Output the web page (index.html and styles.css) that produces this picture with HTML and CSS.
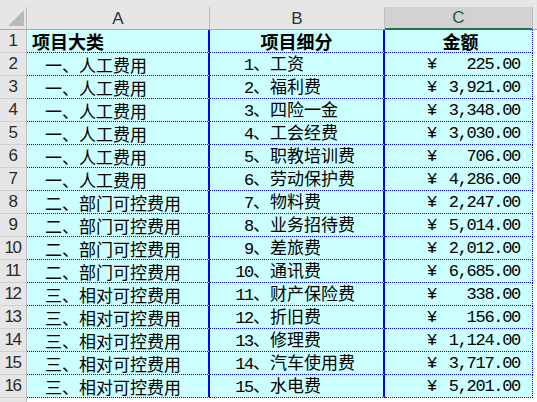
FILE: index.html
```html
<!DOCTYPE html>
<html lang="zh-CN">
<head>
<meta charset="utf-8">
<title>费用明细</title>
<link rel="stylesheet" href="styles.css">
</head>
<body>
<div class="sheet">
  <div class="topstrip"></div>
  <div class="grid">
    <div class="corner"><svg width="16" height="16" viewBox="0 0 16 16"><polygon points="16,0 16,16 0,16" fill="#b9b9b9"/></svg></div>
    <div class="colhead">A</div>
    <div class="colhead">B</div>
    <div class="colhead sel">C</div>
    <div class="colhead rest"></div>

    <div class="rowhead">1</div>
    <div class="cell a head">项目大类</div>
    <div class="cell b head center">项目细分</div>
    <div class="cell c head center">金额</div>
    <div class="blank"></div>

    <div class="rowhead">2</div>
    <div class="cell a">一、人工费用</div>
    <div class="cell b"><span class="lbl"><span class="n">1</span>、工资</span></div>
    <div class="cell c"><span class="y">¥</span><span class="v">225.00</span></div>
    <div class="blank"></div>

    <div class="rowhead">3</div>
    <div class="cell a">一、人工费用</div>
    <div class="cell b"><span class="lbl"><span class="n">2</span>、福利费</span></div>
    <div class="cell c"><span class="y">¥</span><span class="v">3,921.00</span></div>
    <div class="blank"></div>

    <div class="rowhead">4</div>
    <div class="cell a">一、人工费用</div>
    <div class="cell b"><span class="lbl"><span class="n">3</span>、四险一金</span></div>
    <div class="cell c"><span class="y">¥</span><span class="v">3,348.00</span></div>
    <div class="blank"></div>

    <div class="rowhead">5</div>
    <div class="cell a">一、人工费用</div>
    <div class="cell b"><span class="lbl"><span class="n">4</span>、工会经费</span></div>
    <div class="cell c"><span class="y">¥</span><span class="v">3,030.00</span></div>
    <div class="blank"></div>

    <div class="rowhead">6</div>
    <div class="cell a">一、人工费用</div>
    <div class="cell b"><span class="lbl"><span class="n">5</span>、职教培训费</span></div>
    <div class="cell c"><span class="y">¥</span><span class="v">706.00</span></div>
    <div class="blank"></div>

    <div class="rowhead">7</div>
    <div class="cell a">一、人工费用</div>
    <div class="cell b"><span class="lbl"><span class="n">6</span>、劳动保护费</span></div>
    <div class="cell c"><span class="y">¥</span><span class="v">4,286.00</span></div>
    <div class="blank"></div>

    <div class="rowhead">8</div>
    <div class="cell a">二、部门可控费用</div>
    <div class="cell b"><span class="lbl"><span class="n">7</span>、物料费</span></div>
    <div class="cell c"><span class="y">¥</span><span class="v">2,247.00</span></div>
    <div class="blank"></div>

    <div class="rowhead">9</div>
    <div class="cell a">二、部门可控费用</div>
    <div class="cell b"><span class="lbl"><span class="n">8</span>、业务招待费</span></div>
    <div class="cell c"><span class="y">¥</span><span class="v">5,014.00</span></div>
    <div class="blank"></div>

    <div class="rowhead">10</div>
    <div class="cell a">二、部门可控费用</div>
    <div class="cell b"><span class="lbl"><span class="n">9</span>、差旅费</span></div>
    <div class="cell c"><span class="y">¥</span><span class="v">2,012.00</span></div>
    <div class="blank"></div>

    <div class="rowhead">11</div>
    <div class="cell a">二、部门可控费用</div>
    <div class="cell b"><span class="lbl"><span class="n">10</span>、通讯费</span></div>
    <div class="cell c"><span class="y">¥</span><span class="v">6,685.00</span></div>
    <div class="blank"></div>

    <div class="rowhead">12</div>
    <div class="cell a">三、相对可控费用</div>
    <div class="cell b"><span class="lbl"><span class="n">11</span>、财产保险费</span></div>
    <div class="cell c"><span class="y">¥</span><span class="v">338.00</span></div>
    <div class="blank"></div>

    <div class="rowhead">13</div>
    <div class="cell a">三、相对可控费用</div>
    <div class="cell b"><span class="lbl"><span class="n">12</span>、折旧费</span></div>
    <div class="cell c"><span class="y">¥</span><span class="v">156.00</span></div>
    <div class="blank"></div>

    <div class="rowhead">14</div>
    <div class="cell a">三、相对可控费用</div>
    <div class="cell b"><span class="lbl"><span class="n">13</span>、修理费</span></div>
    <div class="cell c"><span class="y">¥</span><span class="v">1,124.00</span></div>
    <div class="blank"></div>

    <div class="rowhead">15</div>
    <div class="cell a">三、相对可控费用</div>
    <div class="cell b"><span class="lbl"><span class="n">14</span>、汽车使用费</span></div>
    <div class="cell c"><span class="y">¥</span><span class="v">3,717.00</span></div>
    <div class="blank"></div>

    <div class="rowhead">16</div>
    <div class="cell a">三、相对可控费用</div>
    <div class="cell b"><span class="lbl"><span class="n">15</span>、水电费</span></div>
    <div class="cell c"><span class="y">¥</span><span class="v">5,201.00</span></div>
    <div class="blank"></div>

    <div class="rowhead last"></div>
    <div class="blank"></div>
    <div class="blank"></div>
    <div class="blank"></div>
    <div class="blank"></div>
  </div>
</div>
</body>
</html>
```

FILE: styles.css
```css
* { box-sizing: border-box; }
html, body {
  margin: 0;
  padding: 0;
  background: #ffffff;
  overflow: hidden;
}
.sheet {
  width: 537px;
  height: 402px;
  overflow: hidden;
  font-family: "Noto Sans CJK SC", "Noto Sans", sans-serif;
}
.topstrip {
  height: 7px;
  background: #e6e6e6;
}
.grid {
  display: grid;
  grid-template-columns: 27px 183px 175px 148px 1fr;
  grid-template-rows: 23px repeat(16, 23px) 23px;
}
.corner {
  background: #e6e6e6;
  border-right: 1px solid #bdbdbd;
  border-bottom: 1px solid #ababab;
  display: flex;
  align-items: flex-start;
  padding: 3px 0 0 8px;
}
.colhead {
  background: #e6e6e6;
  border-right: 1px solid #bdbdbd;
  border-bottom: 1px solid #ababab;
  font-family: "Liberation Sans", Arial, sans-serif;
  font-size: 17px;
  color: #333333;
  display: flex;
  align-items: center;
  justify-content: center;
  padding-top: 1px;
}
.colhead.sel {
  background: #d2d2d2;
  border-bottom: 2px solid #217346;
  border-right: 1px solid #bdbdbd;
  color: #1f5c39;
}
.colhead.rest {
  border-right: none;
}
.rowhead {
  background: #e6e6e6;
  border-right: 1px solid #bdbdbd;
  border-bottom: 1px solid #d0d0d0;
  font-family: "Liberation Sans", Arial, sans-serif;
  font-size: 17px;
  letter-spacing: -1.5px;
  color: #2b2b2b;
  display: flex;
  align-items: center;
  justify-content: center;
  padding-right: 1px;
}
.cell {
  background: #ccffff;
  border-bottom: 1px dotted #0000ff;
  font-size: 17px;
  color: #000000;
  display: flex;
  align-items: center;
  white-space: nowrap;
  line-height: 1;
}
.cell.a {
  border-right: 2px solid #0000ff;
  padding-left: 18px;
}
.cell.b {
  border-right: 2px solid #0000ff;
  padding-left: 25px;
}
.lbl {
  line-height: 1;
}
.cell.c {
  border-right: 1px dotted #0000ff;
  padding-left: 42px;
  padding-right: 12px;
  justify-content: space-between;
}
.cell.a.head {
  padding-left: 5px;
}
.cell.head {
  font-weight: bold;
  font-size: 18px;
}
.cell.center {
  justify-content: center;
  padding-left: 0;
  padding-right: 0;
}
.cell.c.center {
  padding-left: 4px;
}
.n {
  display: inline-block;
  width: 18px;
  text-align: right;
  font-family: "Liberation Mono", monospace;
  font-size: 17px;
  letter-spacing: -1.3px;
}
.y, .v {
  font-family: "Liberation Mono", monospace;
  font-size: 17px;
  letter-spacing: -1.3px;
}
.blank {
  background: #ffffff;
}
```
